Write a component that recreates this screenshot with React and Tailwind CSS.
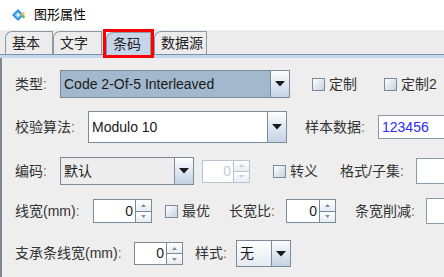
const FONT = { fontFamily: '"Liberation Sans", "Noto Sans CJK SC", sans-serif' }

function Arrow() {
  return (
    <svg width="10" height="6" viewBox="0 0 10 6">
      <path d="M0 0 H10 L5 5.5 Z" fill="#1a1a1a" />
    </svg>
  )
}

function Combo({ text, w, h, bg = 'bg-white' }) {
  return (
    <div className={`flex shrink-0 border border-[#7a8a99] ${bg}`} style={{ width: w, height: h }}>
      <div className="flex-1 flex items-center pl-[3px] text-[14px] text-[#1a1a1a] overflow-hidden whitespace-nowrap">{text}</div>
      <div className="w-[19px] flex items-center justify-center border-l border-[#7a8a99] bg-gradient-to-b from-[#fdfdfe] to-[#c3d3e5]">
        <Arrow />
      </div>
    </div>
  )
}

function Spinner({ w, h, disabled }) {
  const border = disabled ? 'border-[#b8c4d0]' : 'border-[#7a8a99]'
  return (
    <div className={`flex shrink-0 border ${border} bg-white`} style={{ width: w, height: h }}>
      <div className={`flex-1 flex items-center justify-end pr-[2px] text-[14px] ${disabled ? 'text-[#c4ccd4]' : 'text-[#222]'}`}>0</div>
      <div className={`w-[16px] flex flex-col border-l ${border}`}>
        <div className={`flex-1 flex items-center justify-center border-b ${border} bg-gradient-to-b from-white to-[#e6ecf2]`}>
          <svg width="5" height="3" viewBox="0 0 5 3"><path d="M0 3 L2.5 0 L5 3Z" fill={disabled ? '#c8ccd0' : '#8a8a8a'} /></svg>
        </div>
        <div className="flex-1 flex items-center justify-center bg-gradient-to-b from-white to-[#e6ecf2]">
          <svg width="5" height="3" viewBox="0 0 5 3"><path d="M0 0 L5 0 L2.5 3Z" fill={disabled ? '#c8ccd0' : '#8a8a8a'} /></svg>
        </div>
      </div>
    </div>
  )
}

function Check({ label, ml }) {
  return (
    <div className="flex shrink-0 items-center gap-[4px]" style={{ marginLeft: ml }}>
      <div className="w-[13px] h-[13px] border border-[#7a8a99] bg-gradient-to-br from-white to-[#c6d2e0]" />
      <span className="text-[14px] text-[#333] whitespace-nowrap">{label}</span>
    </div>
  )
}

function Label({ text, w, ml = 0 }) {
  return (
    <div className="text-[14px] text-[#333] whitespace-nowrap shrink-0" style={{ width: w, marginLeft: ml }}>
      {text}<span className="text-[#8a6a4a]">:</span>
    </div>
  )
}

function Field({ w, h, children }) {
  return (
    <div className="border border-[#8a9aab] bg-white flex items-center pl-[3px] shrink-0 text-[14px]" style={{ width: w, height: h }}>
      {children}
    </div>
  )
}

function Tab({ text, w, active }) {
  return (
    <div
      className={`h-[23px] shrink-0 whitespace-nowrap flex items-center pl-[6px] border-t border-l border-r border-[#8e99a6] rounded-tl-[7px] text-[14px] text-[#222] ${active ? 'bg-[#c5d6ea]' : 'bg-[#ececec]'}`}
      style={{ width: w }}
    >
      {text}
    </div>
  )
}

export default function App() {
  return (
    <div className="w-[444px] h-[277px] overflow-hidden bg-[#eeeeee] flex flex-col" style={FONT}>
      <div className="h-[30px] bg-white flex items-center pl-[11px] gap-[8px] shrink-0">
        <svg width="15" height="15" viewBox="0 0 15 15">
          <path d="M7 1 L13 7 L7 13 L1 7 Z" fill="#2f8fe0" />
          <path d="M7 3.5 L10.5 7 L7 10.5 L3.5 7 Z" fill="#8cc8f5" />
          <path d="M7 5.5 L8.5 7 L7 8.5 L5.5 7 Z" fill="#ffffff" />
          <circle cx="12" cy="6" r="1.8" fill="#f5c542" />
          <circle cx="12.5" cy="9" r="1.4" fill="#6bbf4a" />
        </svg>
        <span className="text-[13px] text-black">图形属性</span>
      </div>

      <div className="h-[25px] bg-[#ececec] flex items-end pl-[5px] shrink-0 border-b border-[#7d8fb0]">
        <Tab text="基本" w={48} />
        <Tab text="文字" w={49} />
        <div className="ml-[1px] border-[3px] border-[#ff0000] h-[29px] -mb-[4px] flex items-end relative z-10 shrink-0">
          <Tab text="条码" w={45} active />
        </div>
        <Tab text="数据源" w={53} />
      </div>
      <div className="h-[3px] bg-[#c8d8ec] shrink-0" />

      <div className="flex-1 border-l-2 border-[#7d8696] flex flex-col">
        <div className="mt-[12px] h-[28px] flex items-center pl-[13px]">
          <Label text="类型" w={45} />
          <Combo text="Code 2-Of-5 Interleaved" w={230} h={28} bg="bg-[#a3b8cc]" />
          <Check label="定制" ml={22} />
          <Check label="定制2" ml={27} />
        </div>

        <div className="mt-[13px] h-[32px] flex items-center pl-[13px]">
          <Label text="校验算法" w={73} />
          <Combo text="Modulo 10" w={199} h={32} />
          <Label text="样本数据" w={73} ml={18} />
          <Field w={80} h={24}><span className="text-[#2a2aff]">123456</span></Field>
        </div>

        <div className="mt-[14px] h-[28px] flex items-center pl-[13px]">
          <Label text="编码" w={45} />
          <Combo text="默认" w={134} h={28} bg="bg-[#ededed]" />
          <div className="ml-[8px] shrink-0"><Spinner w={48} h={23} disabled /></div>
          <Check label="转义" ml={23} />
          <Label text="格式/子集" w={76} ml={22} />
          <Field w={40} h={26} />
        </div>

        <div className="mt-[14px] h-[24px] flex items-center pl-[13px]">
          <Label text="线宽(mm)" w={78} />
          <Spinner w={59} h={24} />
          <Check label="最优" ml={13} />
          <Label text="长宽比" w={57} ml={19} />
          <Spinner w={50} h={24} />
          <Label text="条宽削减" w={71} ml={19} />
          <Field w={40} h={26} />
        </div>

        <div className="mt-[17px] h-[27px] flex items-center pl-[13px]">
          <Label text="支承条线宽(mm)" w={119} />
          <Spinner w={49} h={23} />
          <Label text="样式" w={41} ml={12} />
          <Combo text="无" w={55} h={27} bg="bg-gradient-to-b from-white to-[#e4ebf3]" />
        </div>
      </div>
    </div>
  )
}
